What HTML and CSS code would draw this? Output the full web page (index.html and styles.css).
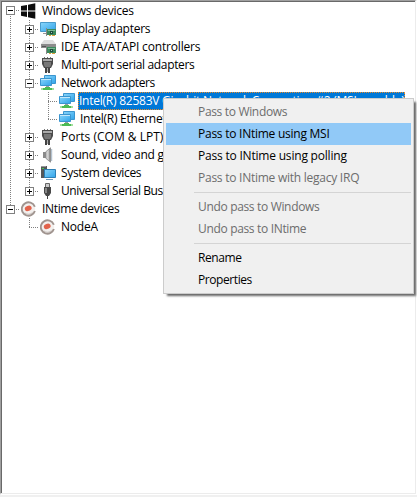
FILE: index.html
```
<!DOCTYPE html>
<html lang="en">
<head>
<meta charset="utf-8">
<title>INtime Device Manager</title>
<link rel="stylesheet" href="styles.css">
</head>
<body>
<svg width="0" height="0" class="defs">
  <defs>
    <linearGradient id="scr" x1="0" y1="0" x2="1" y2="1"><stop offset="0" stop-color="#8ad6fb"/><stop offset="1" stop-color="#2fa3ea"/></linearGradient>
    <linearGradient id="met" x1="0" x2="1"><stop offset="0" stop-color="#aaa"/><stop offset=".5" stop-color="#dcdcdc"/><stop offset="1" stop-color="#666"/></linearGradient>
    <symbol id="win" viewBox="0 0 16 16"><path fill="#0c0c0c" d="M0 3 6 2v5.500H0zM7 1.800 14.300.3v7.200H7zM0 8.500h6V14l-6-1.200zM7 8.500h7.300v7.200L7 14.200z"/></symbol>
    <symbol id="card" viewBox="0 0 10 9"><path fill="#3c8a5c" d="M1 1h9v6H1z"/><path fill="#7fb898" d="M2 2h7v1H2z"/><path fill="#1d4a3c" d="M4 3h3v3H4z"/><path fill="#a5d2b9" d="M5 4h1v1H5z"/><path fill="#888" d="M0 0h1v8H0z"/><path fill="#e0a13a" d="M3 7h2v1H3zM6 7h3v1H6z"/></symbol>
    <symbol id="display" viewBox="0 0 16 16"><path fill="url(#scr)" stroke="#4a9bcb" d="M.5 1.500h15v9H.5z"/><path fill="#999" d="M3 12h4v1H3z"/><use href="#card" x="6" y="7" width="10" height="9"/></symbol>
    <symbol id="ide" viewBox="0 0 16 16"><path fill="#dedede" d="M4 1h9l3 4H1z"/><path fill="#8c8c8c" d="M1 5h15v4H1z"/><path fill="#555" d="M2 7h5v1H2z"/><use href="#card" x="6" y="7" width="10" height="9"/></symbol>
    <symbol id="port" viewBox="0 0 16 16"><path fill="#777" d="M4 0h1v2H4zM7 0h1v2H7zM10 0h1v2h-1z"/><path fill="#4c4c4c" d="M2 1h11v6l-2 4H4L2 7z"/><path fill="#aaa" d="M3 2h9v2H3z"/><path fill="#777" d="M4 5h7v3l-1 2H5L4 8z"/><path fill="#444" d="M5 11h2v5H5zM8 11h2v5H8z"/><path fill="#aaa" d="M7 11h1v4H7z"/></symbol>
    <symbol id="net" viewBox="0 0 16 16"><path fill="url(#scr)" stroke="#3b95cf" d="M4.500.5h11v8h-11z"/><path fill="url(#scr)" stroke="#3b95cf" d="M.5 3.500h11v7H.5z"/><path stroke="#c3e8fb" d="M1 4.500h10"/><path fill="#99a" d="M6 11h3v1H6z"/><path fill="#4cbb55" d="M5 12h5v1H5zM3 13h10v2H3z"/><path fill="#a3df9e" d="M1 13h2v2H1zM12 13h2v2h-2z"/></symbol>
    <symbol id="sound" viewBox="0 0 16 16"><path fill="#8a8a8a" d="M3 5h3v6H3z"/><path fill="url(#met)" stroke="#888" stroke-width=".8" d="M5.500 5 10.500.8v14.400L5.500 11z"/><path fill="none" stroke="#a3b4c4" d="M11.700 2v12"/></symbol>
    <symbol id="system" viewBox="0 0 16 16"><path fill="#55585a" d="M1 1h6v12H1z"/><path fill="#9a9a9a" d="M1 1h5v1H1z"/><path fill="#41ca54" d="M2 3h2v1H2z"/><path fill="url(#scr)" stroke="#2d7fb5" d="M4.500 4.500h11v8h-11z"/><path fill="#6b98b8" d="M6 14h7v1H6z"/></symbol>
    <symbol id="usb" viewBox="0 0 16 16"><path fill="#ccc" stroke="#666" d="M5.500.5h4v4h-4z"/><path fill="#484848" d="M4 4h7v6l-2 3H6l-2-3z"/><path fill="#888" d="M5 5h2v5H5z"/><path fill="#444" d="M7 13h1v3H7z"/></symbol>
    <symbol id="node" viewBox="0 0 16 16"><circle cx="7.500" cy="8" r="6.700" fill="#f3f0ee" stroke="#a0948f" stroke-width="1.900" stroke-dasharray="37.500 4.600" transform="rotate(18 7.500 8)"/><path fill="none" stroke="#c4bcb8" d="M4 12a5.300 5.300 0 0 0 7.500-.5"/><ellipse cx="7.500" cy="7.300" rx="3.500" ry="2.600" fill="#e2634c" transform="rotate(-22 7.500 8)"/></symbol>
  </defs>
</svg>
<main class="tree">
  <div class="row"><i class="g first"><b class="box"></b></i><svg class="ic"><use href="#win"/></svg><span class="t tight">Windows devices</span></div>
  <div class="row"><i class="g v"></i><i class="g v h"><b class="box plus"></b></i><svg class="ic"><use href="#display"/></svg><span class="t tight">Display adapters</span></div>
  <div class="row"><i class="g v"></i><i class="g v h"><b class="box plus"></b></i><svg class="ic"><use href="#ide"/></svg><span class="t wide">IDE ATA/ATAPI controllers</span></div>
  <div class="row"><i class="g v"></i><i class="g v h"><b class="box plus"></b></i><svg class="ic"><use href="#port"/></svg><span class="t tighter">Multi-port serial adapters</span></div>
  <div class="row"><i class="g v"></i><i class="g v h"><b class="box"></b></i><svg class="ic"><use href="#net"/></svg><span class="t tightest">Network adapters</span></div>
  <div class="row"><i class="g v"></i><i class="g v"></i><i class="g v h"></i><svg class="ic"><use href="#net"/></svg><span class="t sel">Intel(R) 82583V Gigabit Network Connection #2 (MSI capable)</span></div>
  <div class="row"><i class="g v"></i><i class="g v"></i><i class="g end h"></i><svg class="ic"><use href="#net"/></svg><span class="t tight">Intel(R) Ethernet</span></div>
  <div class="row"><i class="g v"></i><i class="g v h"><b class="box plus"></b></i><svg class="ic"><use href="#port"/></svg><span class="t wider">Ports (COM &amp; LPT)</span></div>
  <div class="row"><i class="g v"></i><i class="g v h"><b class="box plus"></b></i><svg class="ic"><use href="#sound"/></svg><span class="t">Sound, video and game</span></div>
  <div class="row"><i class="g v"></i><i class="g v h"><b class="box plus"></b></i><svg class="ic"><use href="#system"/></svg><span class="t tighter">System devices</span></div>
  <div class="row"><i class="g v"></i><i class="g end h"><b class="box plus"></b></i><svg class="ic"><use href="#usb"/></svg><span class="t tightest">Universal Serial Bus</span></div>
  <div class="row"><i class="g end h"><b class="box"></b></i><svg class="ic"><use href="#node"/></svg><span class="t tighter">INtime devices</span></div>
  <div class="row"><i class="g"></i><i class="g end h"></i><svg class="ic"><use href="#node"/></svg><span class="t">NodeA</span></div>
</main>
<nav class="menu">
  <div class="item off tighter">Pass to Windows</div>
  <div class="item hot tight">Pass to INtime using MSI</div>
  <div class="item">Pass to INtime using polling</div>
  <div class="item off tight">Pass to INtime with legacy IRQ</div>
  <hr>
  <div class="item off tighter">Undo pass to Windows</div>
  <div class="item off tighter">Undo pass to INtime</div>
  <hr>
  <div class="item tightest">Rename</div>
  <div class="item tightest">Properties</div>
</nav>
</body>
</html>
```
FILE: styles.css
```
* { box-sizing: border-box; }
body {
  margin: 0;
  width: 417px;
  height: 497px;
  overflow: hidden;
  background: #f0f0f0;
  font: 12px/18px "Open Sans", "Noto Sans", sans-serif;
  letter-spacing: -0.2px;
  color: #000;
}
.defs { position: absolute; }
.tree {
  width: 416px;
  height: 494px;
  background: #fff;
  border-top: 1px solid #a0a0a0;
  border-left: 1px solid #a0a0a0;
  border-right: 1px solid #ececec;
  border-bottom: 1px solid #ececec;
  box-shadow: inset 1px 1px #696969, 1px 1px #fff;
  padding-top: 1px;
  overflow: hidden;
}
.row { display: flex; height: 18px; white-space: nowrap; }
.g {
  flex: none;
  width: 19px;
  height: 18px;
  display: flex;
  padding: 5px 0 0 5px;
  background-repeat: no-repeat;
  --dots-y: repeating-linear-gradient(#808080 0 1px, transparent 1px 2px);
  --dots-x: repeating-linear-gradient(90deg, #808080 0 1px, transparent 1px 2px);
}
.g.v { background-image: var(--dots-y); background-size: 1px 18px; background-position: 9px 0; }
.g.v.h { background-image: var(--dots-y), var(--dots-x); background-size: 1px 18px, 10px 1px; background-position: 9px 0, 9px 9px; }
.g.end.h { background-image: var(--dots-y), var(--dots-x); background-size: 1px 10px, 10px 1px; background-position: 9px 0, 9px 9px; }
.g.first { padding-top: 4px; background-image: var(--dots-y), var(--dots-x); background-size: 1px 6px, 10px 1px; background-position: 9px 12px, 9px 8px; }
.box {
  width: 9px;
  height: 9px;
  border: 1px solid #808080;
  background: linear-gradient(#000, #000) 1px 3px / 5px 1px no-repeat, #fff;
}
.box.plus {
  background: linear-gradient(#000, #000) 1px 3px / 5px 1px no-repeat, linear-gradient(#000, #000) 3px 1px / 1px 5px no-repeat, #fff;
}
.ic { flex: none; width: 16px; height: 16px; margin: 1px 2px 0 1px; }
.t { margin-left: 1px; padding: 0 2px; height: 18px; line-height: 18px; }
.tight { letter-spacing: -0.25px; }
.tighter { letter-spacing: -0.33px; }
.tightest { letter-spacing: -0.42px; }
.wide { letter-spacing: -0.17px; }
.wider { letter-spacing: 0; }
.sel {
  width: 327px;
  padding-left: 1px;
  background: #0078d7;
  color: #fff;
  letter-spacing: -0.24px;
  outline: 1px dotted #e98b28;
  outline-offset: -1px;
}
.menu {
  position: absolute;
  left: 163px;
  top: 98px;
  width: 251px;
  height: 196px;
  padding: 2px;
  background: #f0f0f0;
  border: 1px solid #ccc;
  box-shadow: 3px 3px 2px -1px rgba(0, 0, 0, .6);
}
.item { height: 22px; line-height: 22px; padding-left: 32px; white-space: nowrap; }
.off { color: #6d6d6d; }
.hot { background: #91c9f7; }
hr { height: 1px; margin: 3px 0 3px 28px; border: 0; background: #d4d4d4; }
```
